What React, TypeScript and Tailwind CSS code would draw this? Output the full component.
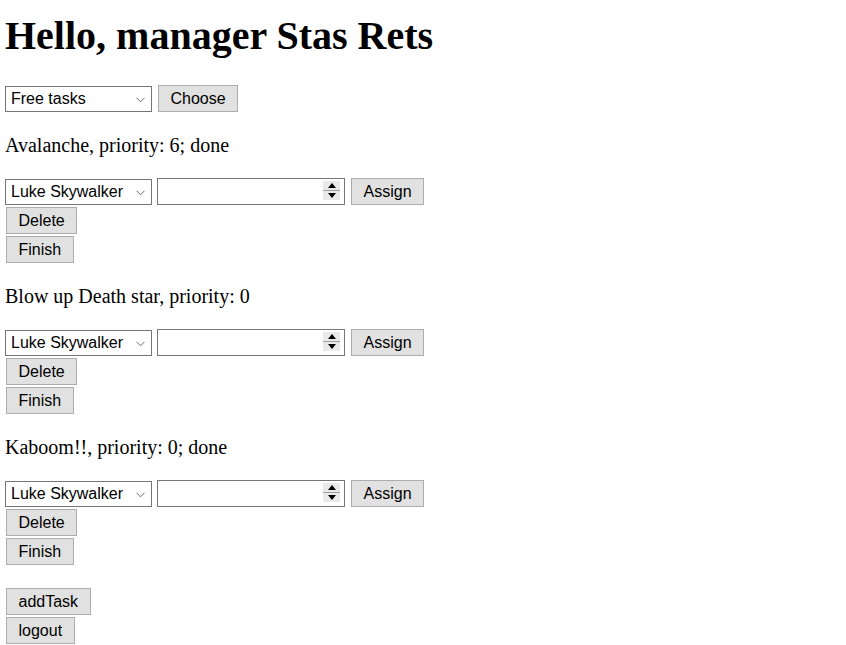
import type { ReactNode } from "react";

interface Task {
  id: number;
  title: string;
  priority: number;
  done: boolean;
}

const tasks: Task[] = [
  { id: 1, title: "Avalanche", priority: 6, done: true },
  { id: 2, title: "Blow up Death star", priority: 0, done: false },
  { id: 3, title: "Kaboom!!", priority: 0, done: true },
];

const controlFont = "font-['Liberation_Sans',Arial,sans-serif] text-[16px] text-black";

function Chevron() {
  return (
    <svg
      width="9"
      height="6"
      viewBox="0 0 9 6"
      className="pointer-events-none absolute right-[6px] top-[10px]"
    >
      <path d="M0.5 0.8 L4.5 4.8 L8.5 0.8" fill="none" stroke="#6b6b6b" strokeWidth="1" />
    </svg>
  );
}

function Select({ value }: { value: string }) {
  return (
    <div
      className={`relative box-border flex h-[26px] w-[147px] items-center border border-[#767676] bg-white pl-[5px] ${controlFont}`}
    >
      <span className="leading-[20px]">{value}</span>
      <Chevron />
    </div>
  );
}

function Button({ children, className = "" }: { children: ReactNode; className?: string }) {
  return (
    <button
      type="button"
      className={`box-border h-[27px] border border-[#adadad] bg-[#e1e1e1] px-[11.5px] leading-[20px] ${controlFont} ${className}`}
    >
      {children}
    </button>
  );
}

function NumberInput() {
  return (
    <div className="relative box-border h-[27px] w-[188px] border border-[#767676] bg-white">
      <div className="absolute right-[4px] top-[2px] flex h-[19px] w-[17px] flex-col bg-[#e9e9e9]">
        <div className="flex flex-1 items-center justify-center border-b border-[#a0a0a0]">
          <svg width="8" height="5" viewBox="0 0 8 5">
            <path d="M4 0 L8 5 L0 5 Z" fill="#000" />
          </svg>
        </div>
        <div className="flex flex-1 items-center justify-center">
          <svg width="8" height="5" viewBox="0 0 8 5">
            <path d="M0 0 L8 0 L4 5 Z" fill="#000" />
          </svg>
        </div>
      </div>
    </div>
  );
}

function TaskItem({ task }: { task: Task }) {
  return (
    <div className="flex flex-col items-start">
      <p className="mt-[22px] text-[20px] leading-[23px]">
        {task.title}, priority: {task.priority}
        {task.done ? "; done" : ""}
      </p>
      <div className="mt-[21px] flex items-center">
        <Select value="Luke Skywalker" />
        <div className="ml-[5px]">
          <NumberInput />
        </div>
        <Button className="ml-[6px]">Assign</Button>
      </div>
      <Button className="ml-px mt-[2px]">Delete</Button>
      <Button className="ml-px mt-[2px]">Finish</Button>
    </div>
  );
}

export default function App() {
  return (
    <main className="min-h-[645px] bg-white pl-[5px] pt-[13px] font-['Liberation_Serif','Times_New_Roman',serif] text-black">
      <h1 className="text-[40px] font-bold leading-[46px]">Hello, manager Stas Rets</h1>

      <div className="mt-[26px] flex items-center">
        <Select value="Free tasks" />
        <Button className="ml-[6px]">Choose</Button>
      </div>

      {tasks.map((task) => (
        <TaskItem key={task.id} task={task} />
      ))}

      <div className="flex flex-col items-start">
        <Button className="ml-px mt-[23px]">addTask</Button>
        <Button className="ml-px mt-[2px]">logout</Button>
      </div>
    </main>
  );
}
